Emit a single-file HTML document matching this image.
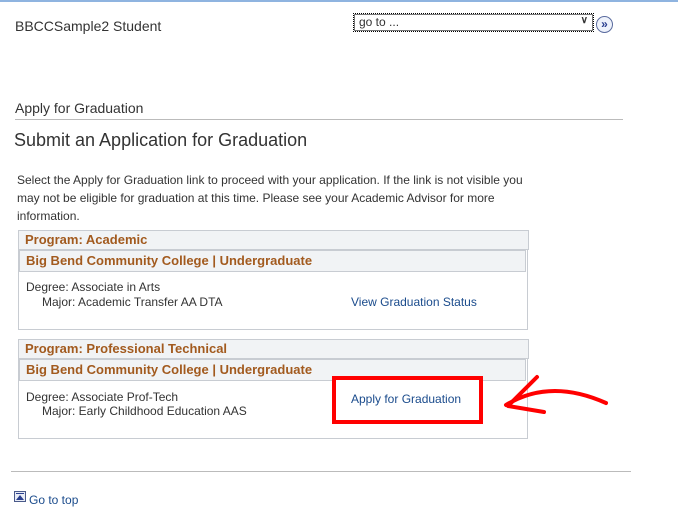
<!DOCTYPE html>
<html><head><style>
body{margin:0;width:678px;height:523px;position:relative;background:#fff;font-family:"Liberation Sans",Arial,sans-serif;overflow:hidden}
.a{position:absolute}
.t{font-size:12px;color:#333}
.h{font-size:13px;font-weight:bold;color:#a25a1e}
.box{position:absolute;border:1px solid #c8ccd2;box-sizing:border-box}
.hd{position:absolute;background:#f1f3f5;border:1px solid #c8ccd2;box-sizing:border-box;padding:1px 6px}
.lnk{font-size:12px;color:#1a4b8c}
</style></head><body>
<div class="a" style="left:0;top:0;width:678px;height:2px;background:#8fb4e0"></div>
<div class="a" style="left:15px;top:18px;font-size:14px;color:#333">BBCCSample2 Student</div>
<div class="a" style="left:353px;top:13px;width:241px;height:19px;border:1px dotted #000;box-sizing:border-box;outline:1px solid #777;outline-offset:-2px;font-size:12px;color:#333;padding:1px 5px">go to ...<span style="position:absolute;right:5px;top:1px;font-size:10px;font-weight:bold">&#x2228;</span></div>
<div class="a" style="left:596px;top:16px;width:15px;height:15px;border:1px solid #5a6b9e;border-radius:50%;background:#eef2fb;font-size:12px;line-height:14px;text-align:center;color:#2a3f8f;font-weight:bold">»</div>
<div class="a" style="left:15px;top:100px;font-size:14px;color:#333">Apply for Graduation</div>
<div class="a" style="left:15px;top:119px;width:608px;height:1px;background:#bbb"></div>
<div class="a" style="left:14px;top:130px;font-size:18px;color:#333">Submit an Application for Graduation</div>
<div class="a t" style="left:17px;top:171px;width:515px;line-height:18px">Select the Apply for Graduation link to proceed with your application. If the link is not visible you may not be eligible for graduation at this time. Please see your Academic Advisor for more information.</div>

<div class="box" style="left:18px;top:230px;width:510px;height:100px"></div>
<div class="hd h" style="left:18px;top:230px;width:511px;height:20px">Program: Academic</div>
<div class="hd h" style="left:19px;top:250px;width:507px;height:22px;padding-top:2px">Big Bend Community College | Undergraduate</div>
<div class="a t" style="left:26px;top:280px">Degree: Associate in Arts</div>
<div class="a t" style="left:42px;top:295px">Major: Academic Transfer AA DTA</div>
<div class="a lnk" style="left:351px;top:295px">View Graduation Status</div>

<div class="box" style="left:18px;top:339px;width:510px;height:100px"></div>
<div class="hd h" style="left:18px;top:339px;width:511px;height:20px">Program: Professional Technical</div>
<div class="hd h" style="left:19px;top:359px;width:507px;height:22px;padding-top:2px">Big Bend Community College | Undergraduate</div>
<div class="a t" style="left:26px;top:390px">Degree: Associate Prof-Tech</div>
<div class="a t" style="left:42px;top:404px">Major: Early Childhood Education AAS</div>
<div class="a" style="left:332px;top:376px;width:151px;height:48px;border:4px solid #f00;box-sizing:border-box;background:#fff"></div>
<div class="a lnk" style="left:351px;top:392px">Apply for Graduation</div>
<svg class="a" style="left:500px;top:370px" width="120" height="60" viewBox="0 0 120 60">
<path d="M6 35 Q50 8 106 33" stroke="#f00" stroke-width="4" fill="none" stroke-linecap="round"/>
<path d="M37 7 L8 36 L44 42" stroke="#f00" stroke-width="4" fill="none" stroke-linecap="round" stroke-linejoin="round"/>
</svg>

<div class="a" style="left:11px;top:471px;width:620px;height:1px;background:#bbb"></div>
<div class="a" style="left:14px;top:491px;width:12px;height:11px;border:1px solid #4a5a8a;background:#e8ecf6;box-sizing:border-box"><div style="position:absolute;left:1px;top:1px;width:8px;height:1px;background:#2a3f8f"></div><div style="position:absolute;left:1px;top:3px;width:0;height:0;border-left:4px solid transparent;border-right:4px solid transparent;border-bottom:5px solid #2a3f8f"></div></div>
<div class="a lnk" style="left:29px;top:493px">Go to top</div>
</body></html>
